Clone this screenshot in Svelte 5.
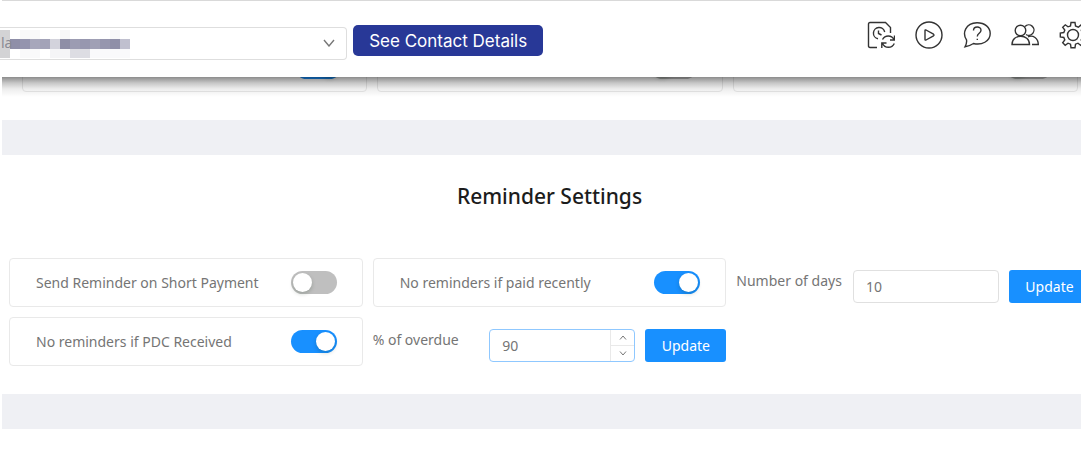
<script lang="ts">
  let shortPayment = $state(false);
  let paidRecently = $state(true);
  let pdcReceived = $state(true);
  let days = $state("10");
  let overdue = $state(90);

  // switches of the section that is scrolled under the header
  let previous = $state([
    { name: "First setting", on: true },
    { name: "Second setting", on: false },
    { name: "Third setting", on: false },
  ]);

  // pixelated customer name, in 10px tiles
  const tiles = [
    { x: 0, y: 3, w: 10, h: 28, fill: "#d3d3d5" },
    { x: 20, y: 3, w: 20, h: 10, fill: "#f8f8f9" },
    { x: 60, y: 3, w: 10, h: 10, fill: "#f7f7f8" },
    { x: 110, y: 3, w: 10, h: 10, fill: "#f8f8f9" },
    { x: 10, y: 12, w: 10, h: 10, fill: "#8f8fa8" },
    { x: 20, y: 12, w: 10, h: 10, fill: "#9494ae" },
    { x: 30, y: 12, w: 10, h: 10, fill: "#a7a7bb" },
    { x: 40, y: 12, w: 10, h: 10, fill: "#a3a3b8" },
    { x: 50, y: 12, w: 10, h: 10, fill: "#d3d3dc" },
    { x: 60, y: 12, w: 10, h: 10, fill: "#8e8ea6" },
    { x: 70, y: 12, w: 10, h: 10, fill: "#9c9cb2" },
    { x: 80, y: 12, w: 10, h: 10, fill: "#9797af" },
    { x: 90, y: 12, w: 10, h: 10, fill: "#a0a0b5" },
    { x: 100, y: 12, w: 10, h: 10, fill: "#9696ae" },
    { x: 110, y: 12, w: 10, h: 10, fill: "#8f8fa8" },
    { x: 120, y: 12, w: 10, h: 10, fill: "#c0c0cf" },
    { x: 20, y: 22, w: 20, h: 9, fill: "#f9f9fa" },
    { x: 50, y: 22, w: 20, h: 9, fill: "#f5f5f7" },
    { x: 70, y: 22, w: 20, h: 9, fill: "#dddde3" },
    { x: 90, y: 22, w: 40, h: 9, fill: "#f9f9fb" },
  ];
</script>

<div class="page">
  <header class="topbar">
    <div class="customer">
      <select aria-label="Customer">
        <option>la</option>
      </select>
      <svg class="chevron" width="12" height="8" viewBox="0 0 12 8" aria-hidden="true">
        <path d="M1 1 L6 7 L11 1" />
      </svg>
      <svg class="mosaic" width="130" height="32" aria-hidden="true">
        {#each tiles as t}
          <rect x={t.x} y={t.y} width={t.w} height={t.h} fill={t.fill} />
        {/each}
        <text x="1" y="21">la</text>
      </svg>
    </div>
    <button class="contact">See Contact Details</button>

    <nav class="tools">
      <button class="tool" aria-label="Scheduled reports">
        <svg viewBox="0 0 28 28">
          <path d="M10 26.5 H3 Q1.5 26.5 1.5 25 V3 Q1.5 1.5 3 1.5 H18.5 L23.5 6.5 V12" />
          <path d="M11 17.8 A5.7 5.7 0 1 1 17.7 11" />
          <path d="M11.5 9.5 V12.5 L14.5 14" />
          <path d="M15.5 18.5 A6.5 6.5 0 0 1 27 18.5 M27.5 14.5 V19 H23" />
          <path d="M27.3 22.5 A6.5 6.5 0 0 1 15.5 22.5 M14.8 27 V22 H19.5" />
        </svg>
      </button>
      <button class="tool" aria-label="Play tutorial">
        <svg viewBox="0 0 28 28">
          <circle cx="14" cy="14" r="13" />
          <path d="M10 9.5 Q10 8.5 11 9 L18.5 13.2 Q19.5 14 18.5 14.8 L11 19 Q10 19.5 10 18.5 Z" />
        </svg>
      </button>
      <button class="tool" aria-label="Help">
        <svg viewBox="0 0 28 28">
          <path d="M3.5 18.8 C-1 12 2.5 2 14 1.8 C22 1.8 27.2 6.5 27.2 12.5 C27.2 20.5 18.5 24.5 10.5 22.5 C7.5 24.5 5 25.3 2 25.8 C3.3 23.5 4 21.5 3.5 18.8 Z" />
          <path d="M10.5 9.5 C10.5 4.8 18 4.8 18 9.3 C18 12.3 14.3 12.3 14.3 15.5" />
          <path d="M14.3 17.8 V19" />
        </svg>
      </button>
      <button class="tool" aria-label="Users">
        <svg viewBox="0 0 28 28">
          <circle cx="9.5" cy="9.5" r="5.3" />
          <path d="M1 23.5 C1 12.5 18.5 12.5 18.5 23.5 Z" />
          <path d="M14 5.5 A5.2 5.2 0 1 1 15 13.5" />
          <path d="M17 15.8 C22 13.8 27.3 17 27.3 23.5 H21" />
        </svg>
      </button>
      <button class="tool" aria-label="Settings">
        <svg viewBox="0 0 28 28">
          <circle cx="14" cy="14" r="5.5" />
          <path d="M12 1.5 H16 L16.5 5 L19.3 6.2 L22 4 L24.5 6.5 L22.3 9.2 L23.3 12 L26.8 12.3 V16 L23.3 16.5 L22.2 19 L24.3 21.8 L21.7 24.3 L19 22.2 L16.5 23.2 L16 26.7 H12 L11.5 23.2 L9 22.2 L6.2 24.3 L3.7 21.7 L5.8 19 L4.8 16.5 L1.3 16 V12 L4.8 11.5 L5.8 9 L3.7 6.3 L6.3 3.8 L9 5.8 L11.5 5 Z" />
        </svg>
      </button>
    </nav>
  </header>

  <main>
    <section class="previous">
      {#each previous as item}
        <div class="card">
          <input class="switch" type="checkbox" role="switch" aria-label={item.name} bind:checked={item.on} />
        </div>
      {/each}
    </section>

    <section class="reminders">
      <h2>Reminder Settings</h2>
      <div class="grid">
        <label class="card">
          Send Reminder on Short Payment
          <input class="switch" type="checkbox" role="switch" bind:checked={shortPayment} />
        </label>
        <label class="card">
          No reminders if paid recently
          <input class="switch" type="checkbox" role="switch" bind:checked={paidRecently} />
        </label>
        <form class="field" onsubmit={(e) => e.preventDefault()}>
          <label for="days">Number of days</label>
          <div class="box">
            <input id="days" type="text" inputmode="numeric" bind:value={days} />
          </div>
          <button class="update">Update</button>
        </form>
        <label class="card">
          No reminders if PDC Received
          <input class="switch" type="checkbox" role="switch" bind:checked={pdcReceived} />
        </label>
        <form class="field" onsubmit={(e) => e.preventDefault()}>
          <label for="overdue">% of overdue</label>
          <div class="box active">
            <input id="overdue" type="number" bind:value={overdue} />
            <div class="steps">
              <button type="button" aria-label="Increase" onclick={() => overdue++}>
                <svg width="8" height="5" viewBox="0 0 8 5"><path d="M1 4.5 L4 1 L7 4.5" /></svg>
              </button>
              <button type="button" aria-label="Decrease" onclick={() => overdue--}>
                <svg width="8" height="5" viewBox="0 0 8 5"><path d="M1 0.5 L4 4 L7 0.5" /></svg>
              </button>
            </div>
          </div>
          <button class="update">Update</button>
        </form>
      </div>
    </section>
  </main>
</div>

<style>
  :global(body) {
    margin: 0;
    background: #fff;
  }

  .page {
    padding-left: 2px;
    overflow: hidden;
    font-family: "Noto Sans", "Open Sans", sans-serif;
    font-size: 14px;
    line-height: 22px;
    color: #757575;
  }

  .page * {
    box-sizing: border-box;
  }

  button,
  input,
  select {
    font: inherit;
    color: inherit;
  }

  button {
    border: 0;
    padding: 0;
    cursor: pointer;
  }

  svg {
    fill: none;
    stroke: #333;
  }

  .topbar {
    position: relative;
    z-index: 1;
    display: flex;
    align-items: flex-start;
    height: 77px;
    margin-right: -6px;
    padding-top: 20px;
    background: #fff;
    border-top: 1px solid #d9d9d9;
  }

  /* shadow on the bottom side only */
  .topbar::after {
    content: "";
    position: absolute;
    top: 100%;
    left: 0;
    right: 0;
    height: 20px;
    background: linear-gradient(
      rgba(0, 0, 0, 0.45),
      rgba(0, 0, 0, 0.22) 30%,
      rgba(0, 0, 0, 0.07) 60%,
      transparent
    );
    pointer-events: none;
  }

  .customer {
    position: relative;
    width: 32%;
    margin: 6px 6px 0 -2px;
  }

  .customer select {
    display: block;
    width: 100%;
    height: 33px;
    padding: 0 32px 0 1px;
    appearance: none;
    background: #fff;
    border: 1px solid #dedede;
    border-left: 0;
    border-radius: 0 4px 4px 0;
    color: transparent;
  }

  .chevron {
    position: absolute;
    top: 12px;
    right: 12px;
    stroke: #777;
    stroke-width: 1.4;
    pointer-events: none;
  }

  .mosaic {
    position: absolute;
    top: 0;
    left: 0;
    stroke: none;
    pointer-events: none;
  }

  .mosaic text {
    fill: #8a8a94;
  }

  .contact {
    height: 31px;
    margin-top: 4px;
    padding: 0 16px;
    background: #283897;
    border-radius: 5px;
    color: #fff;
    font-family: Inter, sans-serif;
    font-size: 17px;
  }

  .tools {
    display: flex;
    gap: 20px;
    margin-left: auto;
  }

  .tool {
    width: 28px;
    height: 28px;
    background: none;
  }

  .tool svg {
    display: block;
    width: 28px;
    height: 28px;
    stroke-width: 1.4;
  }

  .previous,
  .grid {
    display: grid;
    grid-template-columns: repeat(3, minmax(0, 1fr));
    gap: 10px;
  }

  .previous {
    margin-top: -34px;
    padding: 0 3px 28px 20px;
  }

  .card {
    display: flex;
    align-items: center;
    justify-content: space-between;
    height: 49px;
    padding: 0 25px 0 26px;
    border: 1px solid #e9e9e9;
    border-radius: 4px;
  }

  .previous .switch {
    margin-left: auto;
  }

  .switch {
    appearance: none;
    flex: none;
    display: flex;
    width: 46px;
    height: 23px;
    margin: 0;
    padding: 2px;
    border-radius: 12px;
    background: #bfbfbf;
    cursor: pointer;
  }

  .switch::before {
    content: "";
    width: 19px;
    height: 19px;
    border-radius: 50%;
    background: #fff;
    box-shadow: 0 2px 4px rgba(0, 35, 11, 0.2);
  }

  .switch:checked {
    justify-content: flex-end;
    background: #1890ff;
  }

  .reminders {
    padding: 24px 0 28px 7px;
    border: solid #eff0f4;
    border-width: 35px 0;
    margin-right: -9px;
  }

  h2 {
    margin: 0 0 44px;
    color: #1c1c1c;
    font-size: 21px;
    font-weight: 500;
    line-height: 35px;
    text-align: center;
  }

  .field {
    display: flex;
    align-items: flex-start;
    gap: 10px;
    margin: 12px 0 0;
  }

  .field label {
    flex: 1;
    white-space: nowrap;
  }

  .box {
    display: flex;
    width: 146px;
    height: 33px;
    border: 1px solid #e0e0e0;
    border-radius: 4px;
    overflow: hidden;
  }

  .box.active {
    border-color: #8fc8ff;
  }

  .box input {
    flex: 1;
    min-width: 0;
    padding: 0 12px;
    appearance: textfield;
    background: none;
    border: 0;
    outline: 0;
  }

  .box input::-webkit-inner-spin-button {
    appearance: none;
    margin: 0;
  }

  .steps {
    display: flex;
    flex-direction: column;
    width: 24px;
    border-left: 1px solid #e9e9e9;
  }

  .steps button {
    display: flex;
    flex: 1;
    align-items: center;
    justify-content: center;
    background: none;
  }

  .steps button + button {
    border-top: 1px solid #e9e9e9;
  }

  .steps svg {
    stroke: #777;
  }

  .update {
    width: 81px;
    height: 33px;
    background: #1890ff;
    border-radius: 3px;
    color: #fff;
  }
</style>
